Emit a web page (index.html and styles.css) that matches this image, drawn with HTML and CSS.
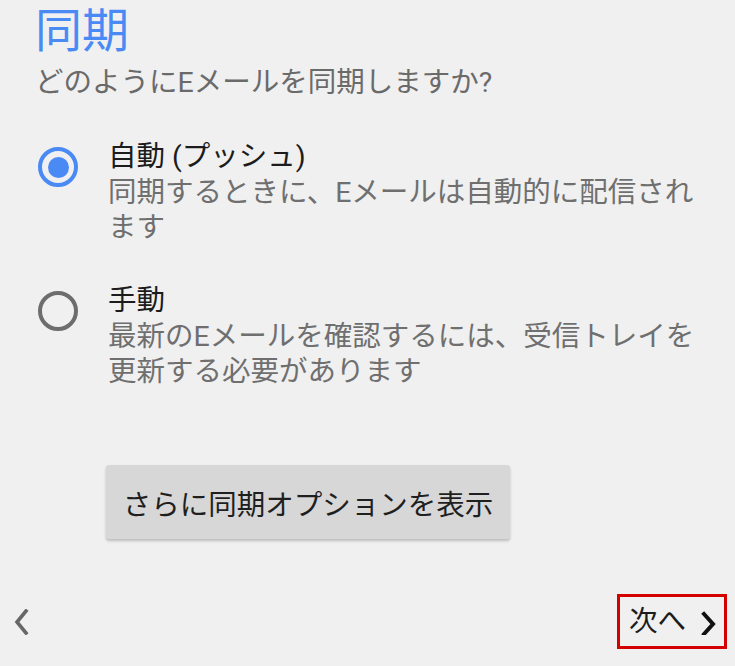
FILE: index.html
```html
<!DOCTYPE html>
<html lang="ja">
<head>
<meta charset="utf-8">
<title>同期</title>
<link rel="stylesheet" href="styles.css">
</head>
<body>
<div class="page">
  <header class="header">
    <h1 class="title">同期</h1>
    <p class="subtitle">どのようにEメールを同期しますか?</p>
  </header>

  <div class="options">
    <div class="option option-first">
      <div class="radio-col"><span class="radio checked"></span></div>
      <div class="option-text">
        <div class="option-title">自動 (プッシュ)</div>
        <div class="option-desc">同期するときに、Eメールは自動的に配信されます</div>
      </div>
    </div>
    <div class="option option-second">
      <div class="radio-col"><span class="radio"></span></div>
      <div class="option-text">
        <div class="option-title">手動</div>
        <div class="option-desc">最新のEメールを確認するには、受信トレイを更新する必要があります</div>
      </div>
    </div>
  </div>

  <div class="button-row">
    <button class="more-button">さらに同期オプションを表示</button>
  </div>

  <nav class="bottom-nav">
    <span class="back">
      <svg width="20" height="26" viewBox="0 0 20 26"><path d="M14 2 L5 13 L14 24" fill="none" stroke="#676767" stroke-width="3.6" stroke-linecap="square"/></svg>
    </span>
    <span class="next">
      <span class="next-label">次へ</span>
      <svg width="22" height="26" viewBox="0 0 22 26"><path d="M6 5 L15 15 L6 25" fill="none" stroke="#111" stroke-width="4" stroke-linecap="square"/></svg>
    </span>
  </nav>
</div>
</body>
</html>
```

FILE: styles.css
```css
html, body {
  margin: 0;
  padding: 0;
  background: #f0f0f0;
}

body {
  font-family: "Roboto", "Noto Sans CJK JP", sans-serif;
}

.page {
  width: 735px;
  height: 666px;
  display: flex;
  flex-direction: column;
  box-sizing: border-box;
}

.header {
  padding-left: 35px;
  padding-top: 3px;
}

.title {
  margin: 0;
  font-size: 47px;
  font-weight: 400;
  line-height: 56px;
  color: #4a8af4;
}

.subtitle {
  margin: 7px 0 0 0;
  font-size: 28.5px;
  line-height: 34px;
  color: #6a6a6a;
}

.options {
  margin-top: 40px;
  display: flex;
  flex-direction: column;
  gap: 39px;
}

.option {
  display: flex;
}

.radio-col {
  width: 108px;
  flex: none;
  padding-left: 38px;
  padding-top: 7px;
  box-sizing: border-box;
}

.radio {
  display: flex;
  align-items: center;
  justify-content: center;
  width: 40px;
  height: 40px;
  border: 4px solid #6d6d6d;
  border-radius: 50%;
  box-sizing: border-box;
}

.radio.checked {
  border-color: #4a8af4;
}

.radio.checked::after {
  content: "";
  width: 21px;
  height: 21px;
  border-radius: 50%;
  background: #4a8af4;
}

.option-text {
  width: 600px;
}

.option-title {
  font-size: 28.5px;
  line-height: 34px;
  color: #1c1c1c;
}

.option-desc {
  font-size: 28.5px;
  line-height: 35px;
  color: #6f6f6f;
  margin-top: 1px;
}

.button-row {
  margin-top: 76px;
  padding-left: 106px;
}

.more-button {
  width: 404px;
  height: 74px;
  border: none;
  border-radius: 3px;
  background: #d7d7d7;
  box-shadow: 0 2px 3px rgba(0, 0, 0, 0.22);
  font-family: "Roboto", "Noto Sans CJK JP", sans-serif;
  font-size: 28.5px;
  color: #1f1f1f;
  padding: 0;
}

.bottom-nav {
  margin-top: auto;
  margin-bottom: 17px;
  display: flex;
  justify-content: space-between;
  align-items: center;
  padding: 0 8px 0 12px;
}

.back {
  display: flex;
  align-items: center;
}

.next {
  display: flex;
  align-items: center;
  width: 110px;
  height: 55px;
  box-sizing: border-box;
  border: 3px solid #d40000;
  padding-left: 9px;
  gap: 12px;
}

.next-label {
  font-size: 28.5px;
  color: #1c1c1c;
  line-height: 34px;
}
```
